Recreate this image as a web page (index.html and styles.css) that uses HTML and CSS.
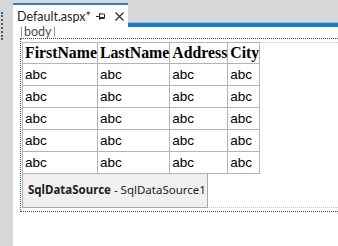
FILE: index.html
```html
<!DOCTYPE html>
<html lang="en">
<head>
    <meta charset="UTF-8">
    <title>Default.aspx</title>
    <link rel="stylesheet" href="styles.css">
</head>
<body>
    <div class="shell">
        <div class="gutter">
            <div class="grip"></div>
        </div>
        <div class="main">
            <div class="tabstrip">
                <div class="tab">
                    <span class="tab-title">Default.aspx*</span>
                    <svg class="pin" width="9" height="8" viewBox="0 0 9 8">
                        <path d="M0 4.5H3.5M3.5 1V8M3.5 2H8.5V6.5H3.5M3.5 5.5H8.5" stroke="#2d2d30" stroke-width="1" fill="none"/>
                    </svg>
                    <svg class="close" width="9" height="9" viewBox="0 0 9 9">
                        <path d="M0.5 0.5L8.5 8.5M8.5 0.5L0.5 8.5" stroke="#2d2d30" stroke-width="1.3" fill="none"/>
                    </svg>
                </div>
                <div class="well-line"></div>
            </div>
            <div class="surface">
                <span class="tag">body</span>
                <div class="design">
                    <div class="form">
                        <table class="grid">
                            <tr><th>FirstName</th><th>LastName</th><th>Address</th><th>City</th></tr>
                            <tr><td>abc</td><td>abc</td><td>abc</td><td>abc</td></tr>
                            <tr><td>abc</td><td>abc</td><td>abc</td><td>abc</td></tr>
                            <tr><td>abc</td><td>abc</td><td>abc</td><td>abc</td></tr>
                            <tr><td>abc</td><td>abc</td><td>abc</td><td>abc</td></tr>
                            <tr><td>abc</td><td>abc</td><td>abc</td><td>abc</td></tr>
                        </table>
                        <div class="datasource"><b>SqlDataSource</b> - SqlDataSource1</div>
                    </div>
                </div>
            </div>
        </div>
    </div>
</body>
</html>
```

FILE: styles.css
```css
body {
    margin: 0;
    background-color: #fff;
    font-family: "Noto Sans", "Open Sans", sans-serif;
    overflow: hidden;
}

.shell {
    display: flex;
    height: 246px;
}

.gutter {
    width: 13px;
    background-color: #d6d7d9;
}

.grip {
    margin: 12px 0 0 1px;
    height: 28px;
    border-left: 2px dotted #55585e;
}

.main {
    flex: 1;
}

/* document tab strip */
.tabstrip {
    height: 27px;
    display: flex;
    align-items: flex-end;
    background-color: #d6d7d9;
}

.tab {
    width: 111px;
    height: 22px;
    padding-left: 4px;
    border-top: 2px solid #2f7fc2;
    background-color: #fff;
    display: flex;
    align-items: center;
}

.tab-title {
    font-family: Lato, "Noto Sans", sans-serif;
    font-size: 12.5px;
    color: #1e1e1e;
    width: 79px;
    white-space: nowrap;
}

.pin {
    margin-right: 10px;
}

.well-line {
    flex: 1;
    height: 4px;
    border-top: 1px solid #8fc1e6;
    background-color: #1c79c2;
}

/* design surface */
.surface {
    padding-left: 7px;
}

.tag {
    display: block;
    width: fit-content;
    margin-left: 1px;
    height: 10px;
    line-height: 9px;
    padding: 0 2px;
    font-family: Lato, "Noto Sans", sans-serif;
    font-size: 12.5px;
    color: #3f4e5e;
    border-left: 1px solid #7d9cc0;
    border-right: 1px solid #7d9cc0;
}

.design {
    margin-top: 1px;
    padding: 3px 0 3px 1px;
    border-top: 1px dotted #2e4f72;
    border-left: 1px dotted #2e4f72;
    border-bottom: 1px dotted #2e4f72;
}

.form {
    border-top: 1px dotted #c4c4c4;
    border-bottom: 1px dotted #c4c4c4;
}

.grid {
    margin-top: -1px;
    border-collapse: collapse;
    border: 1px solid #a9a9a9;
    background-color: #fff;
}

.grid th,
.grid td {
    border: 1px solid #b4b4b4;
    padding: 0 0 0 2px;
    text-align: left;
    height: 21px;
}

.grid th {
    font-family: "Liberation Serif", serif;
    font-size: 15.8px;
    font-weight: bold;
    color: #000;
    height: 20px;
}

.grid td {
    font-family: "Liberation Sans", Arial, sans-serif;
    font-size: 13.5px;
    color: #000;
}

.datasource {
    width: 179px;
    height: 33px;
    line-height: 32px;
    padding-left: 5px;
    margin-bottom: -1px;
    background-color: #f0f0f0;
    border-left: 1px solid #a9a9a9;
    border-right: 1px solid #a9a9a9;
    border-bottom: 1px solid #a9a9a9;
    font-size: 11.5px;
    color: #1e1e1e;
}
```
